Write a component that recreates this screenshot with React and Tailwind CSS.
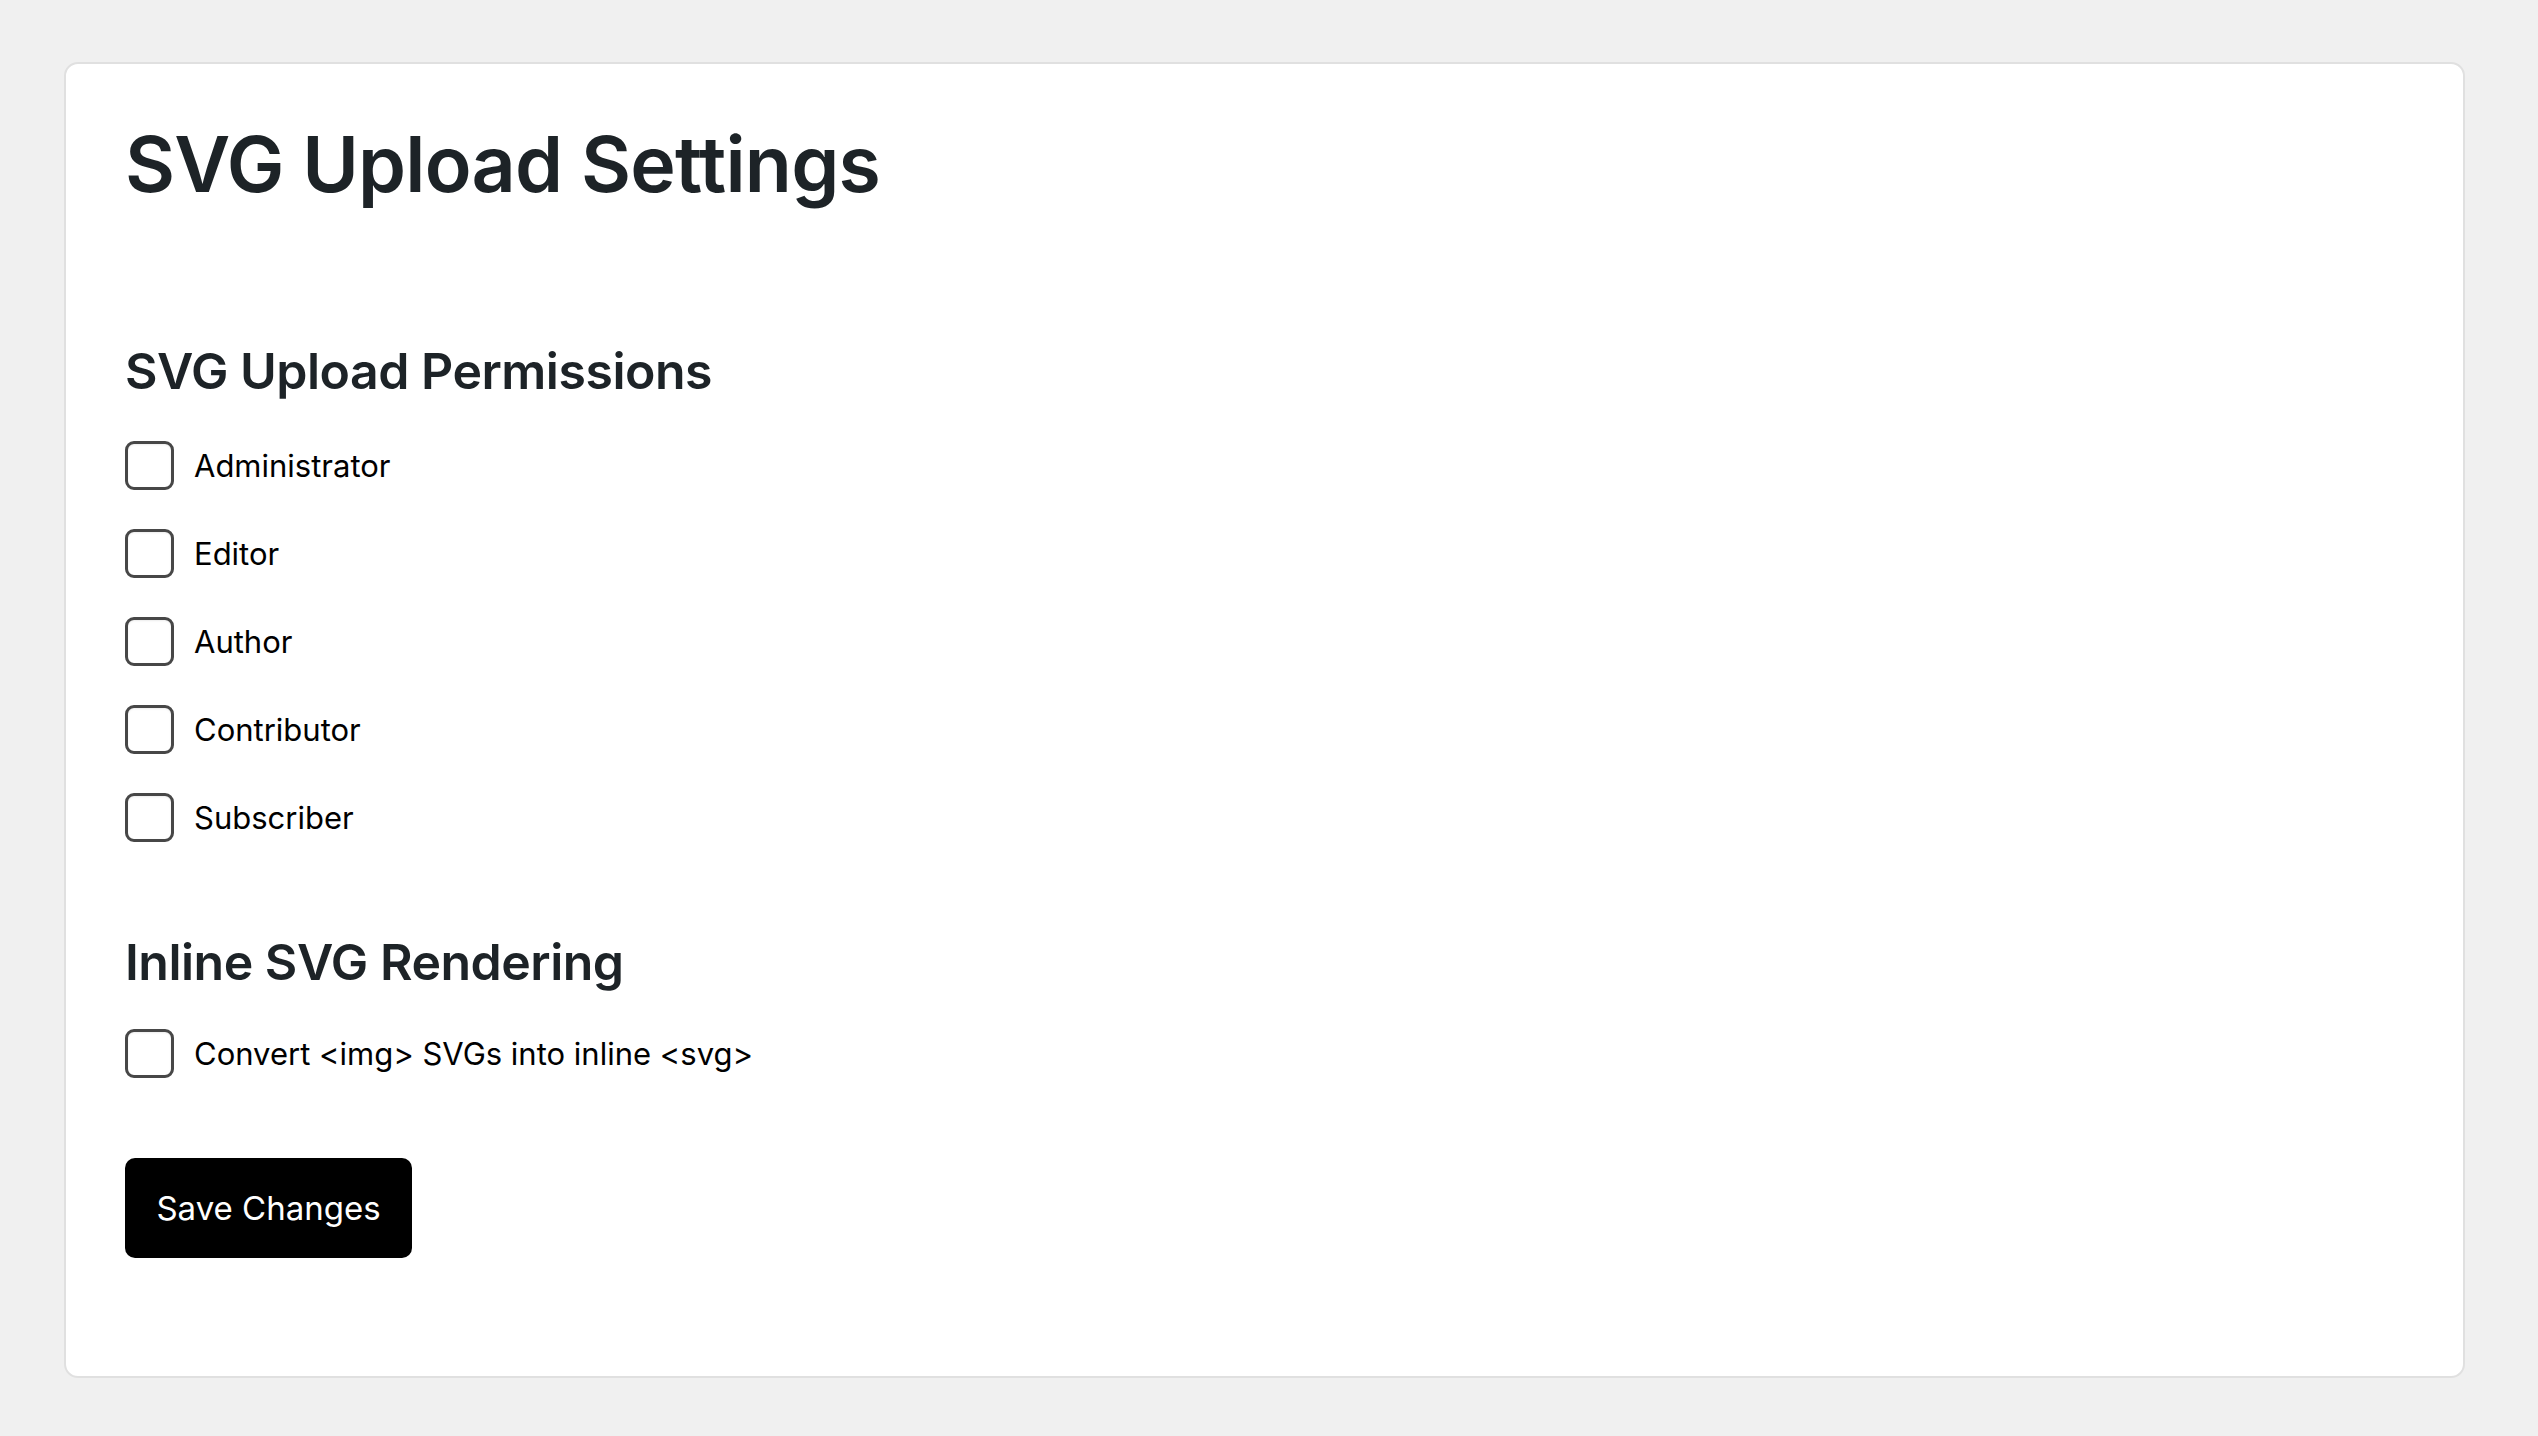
import React from "react";

const roles = ["Administrator", "Editor", "Author", "Contributor", "Subscriber"];

function Check({ label }) {
  return (
    <label className="flex items-center h-[49px] gap-[20px]">
      <span className="block w-[49px] h-[49px] shrink-0 rounded-[9px] border-[3px] border-[#474747] bg-white shadow-[inset_0_1px_2px_rgba(0,0,0,0.08)]" />
      <span className="text-[31px] leading-none text-black">{label}</span>
    </label>
  );
}

export default function App() {
  return (
    <div
      className="min-h-screen bg-[#f0f0f0] pt-[62px] pl-[64px] pr-[73px] pb-[58px]"
      style={{ fontFamily: "Inter, 'Noto Sans', sans-serif" }}
    >
      <div className="bg-white border-2 border-[#e0e0e0] rounded-[14px] h-[1316px] pt-[62px] pl-[59px]">
        <h1 className="text-[77px] leading-none font-semibold text-[#1d2327] tracking-[-0.01em]">
          SVG Upload Settings
        </h1>
        <h2 className="mt-[143px] text-[50px] leading-none font-semibold text-[#1d2327] tracking-[-0.01em]">
          SVG Upload Permissions
        </h2>
        <div className="mt-[45px] flex flex-col gap-[39px]">
          {roles.map((r) => (
            <Check key={r} label={r} />
          ))}
        </div>
        <h2 className="mt-[95px] text-[50px] leading-none font-semibold text-[#1d2327] tracking-[-0.01em]">
          Inline SVG Rendering
        </h2>
        <div className="mt-[42px]">
          <Check label="Convert <img> SVGs into inline <svg>" />
        </div>
        <button className="mt-[80px] h-[100px] w-[287px] bg-black text-white rounded-[10px] text-[33px] leading-none">
          Save Changes
        </button>
      </div>
    </div>
  );
}
